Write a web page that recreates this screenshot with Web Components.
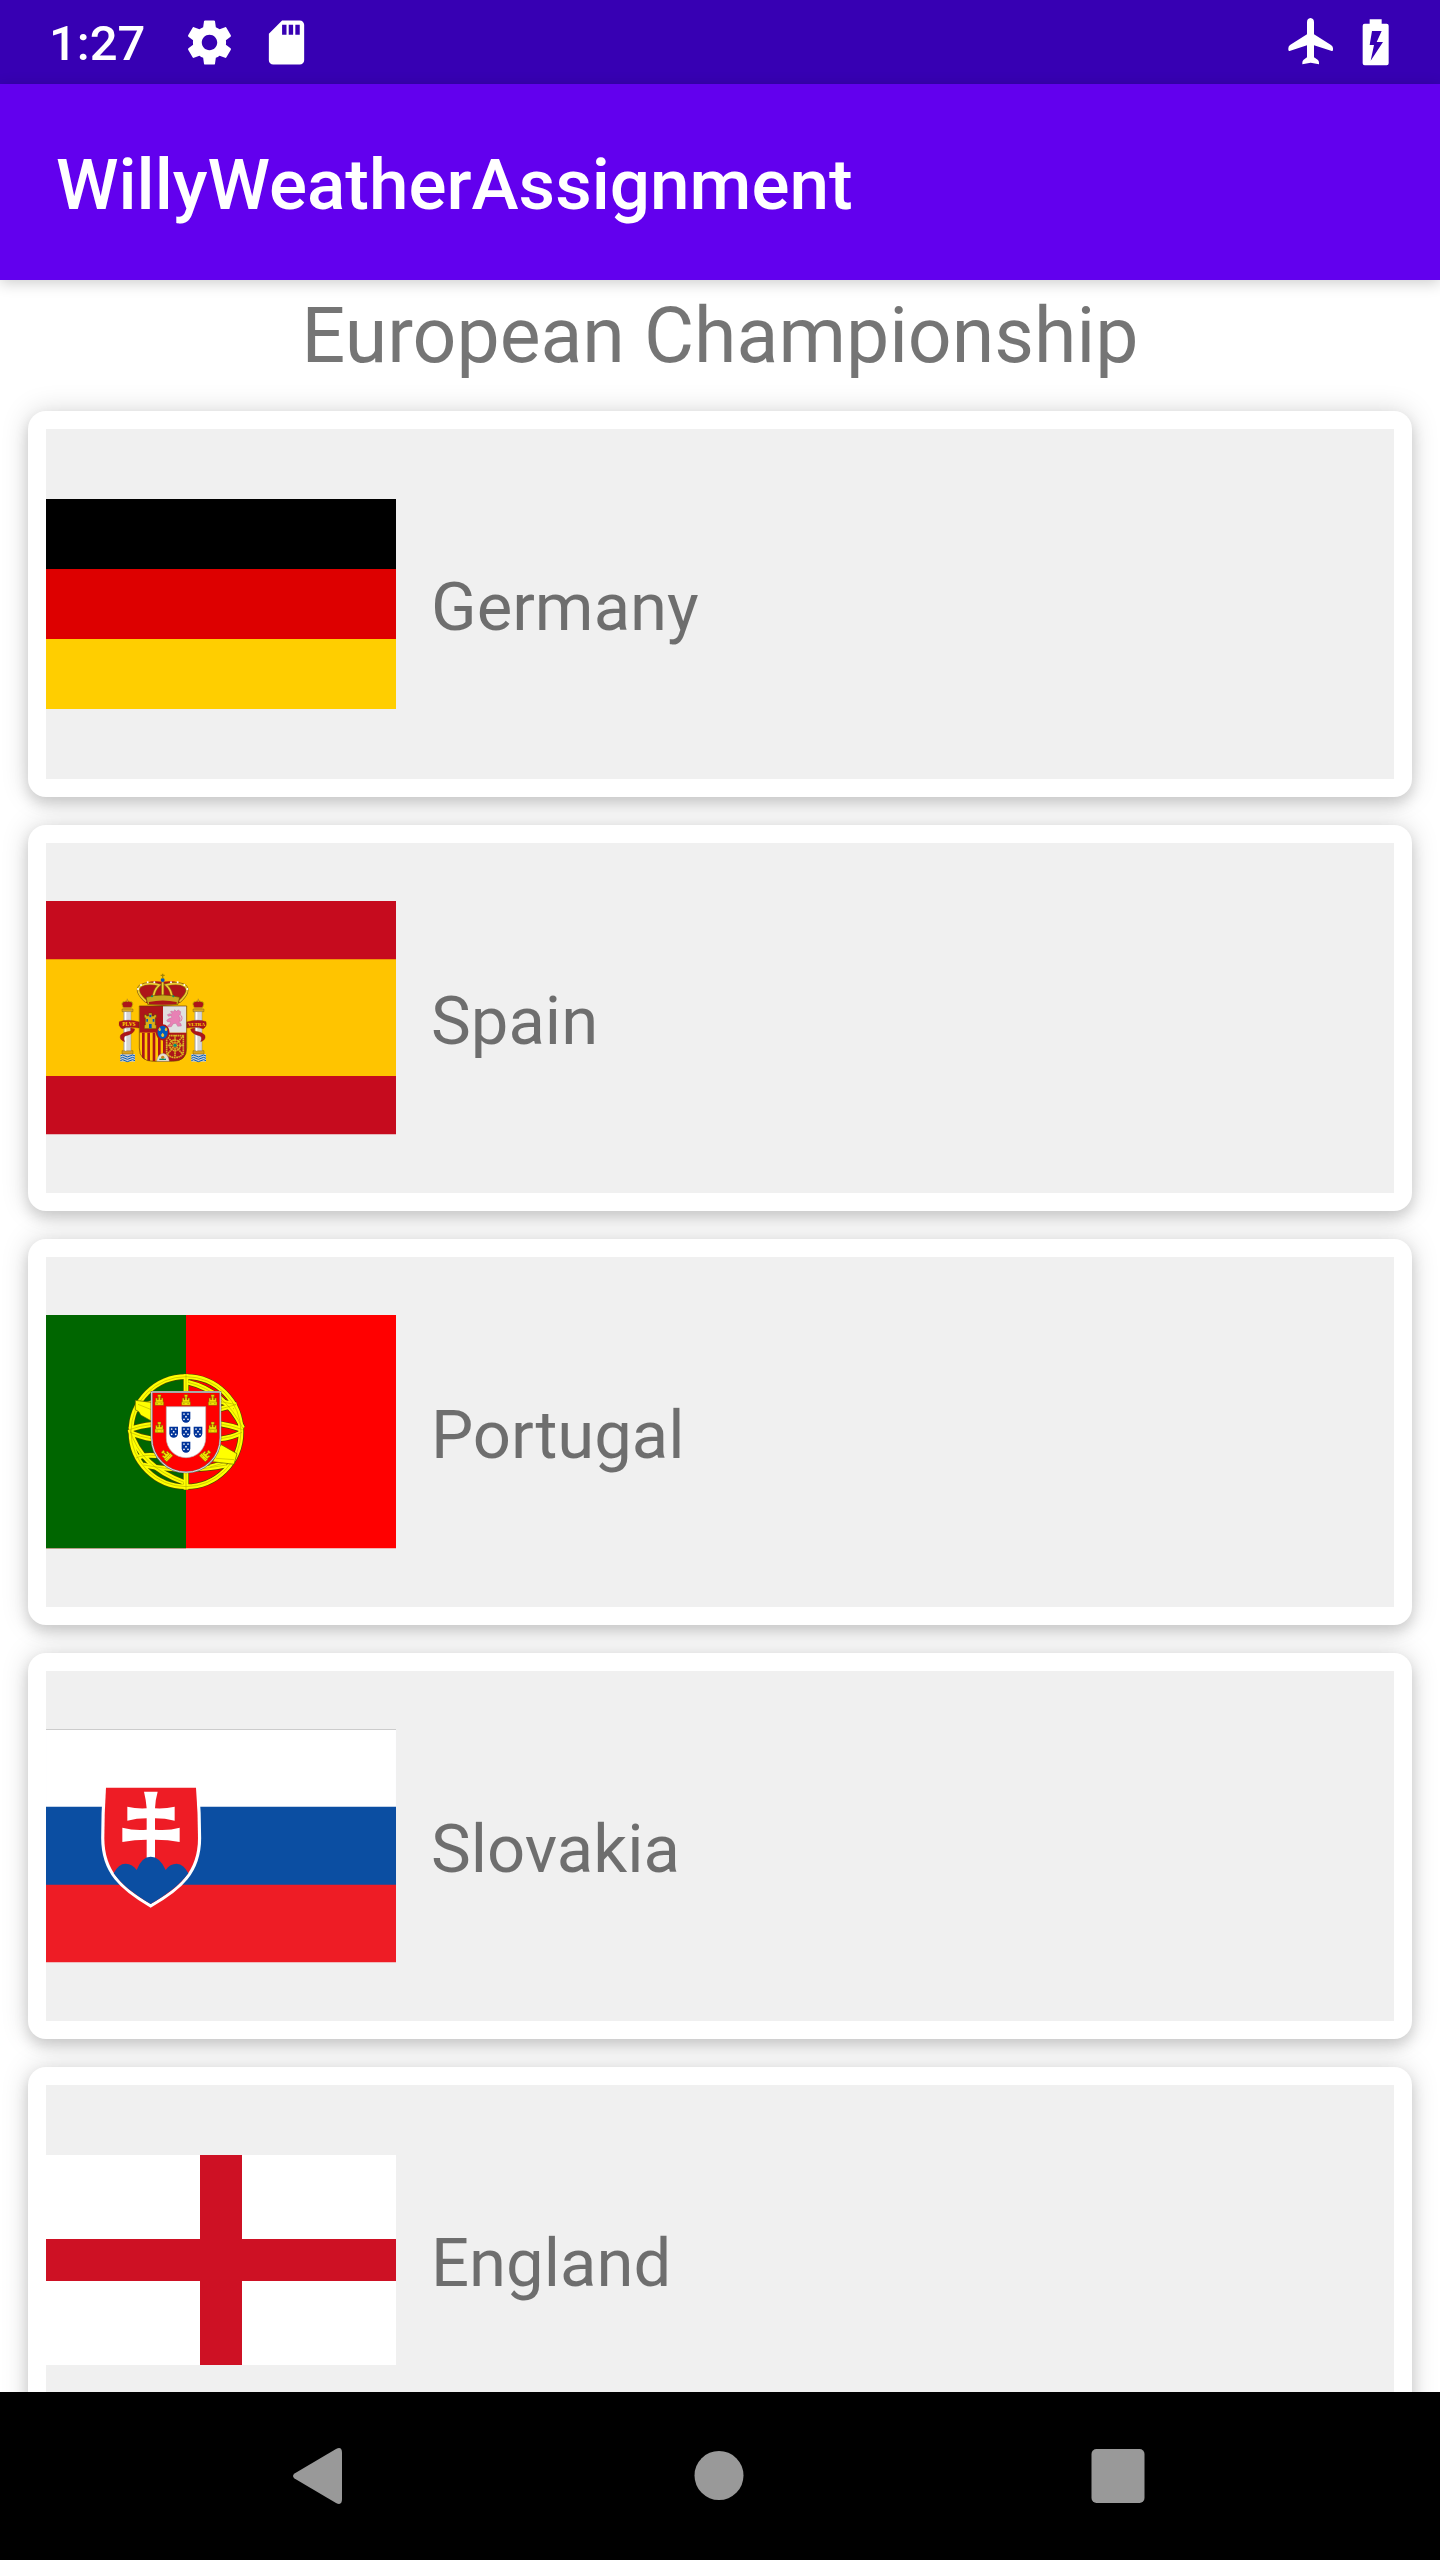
<!DOCTYPE html>
<html lang="en">
<head>
<meta charset="utf-8">
<meta name="viewport" content="width=device-width, initial-scale=1">
<title>WillyWeatherAssignment</title>
<style>
  html, body { margin: 0; height: 100%; }
  body { background: #fff; font-family: Roboto, sans-serif; overflow: hidden; }
</style>
</head>
<body>
<app-screen>
  <status-bar slot="status" time="1:27"></status-bar>
  <app-bar slot="bar">WillyWeatherAssignment</app-bar>
  <team-list heading="European Championship">
    <team-card flag="germany">Germany</team-card>
    <team-card flag="spain">Spain</team-card>
    <team-card flag="portugal">Portugal</team-card>
    <team-card flag="slovakia">Slovakia</team-card>
    <team-card flag="england">England</team-card>
  </team-list>
  <nav-bar slot="nav"></nav-bar>
</app-screen>

<script>
const define = (name, render) => customElements.define(name, class extends HTMLElement {
  constructor() { super(); this.attachShadow({ mode: 'open' }); }
  connectedCallback() { this.shadowRoot.innerHTML = render(this); }
});

/* ---------- Flags (1 unit = a third of a pixel at full size) ---------- */

const castle = (x, y, turn = 0) => `<g transform="translate(${x} ${y}) rotate(${turn})">
  <path d="M-13 16V5h2V-6h5v5h3v-9h-2v-6h10v6h-2v9h3v-5h5V5h2v11z" fill="#f2e400" stroke="#7a6200" stroke-width="1.5"/>
  <path d="M-11 6H11M-9 11h5M4 11h5M-3-9H3" stroke="#8a7400" stroke-width="1.5"/></g>`;

const quina = (x, y) => `<g transform="translate(${x} ${y})">
  <path d="M-13-16h26V4a13 13 0 0 1-26 0z" fill="#039"/>
  <g fill="#fff"><circle cx="-6" cy="-9" r="2.6"/><circle cx="6" cy="-9" r="2.6"/><circle r="2.6" cy="-1"/><circle cx="-6" cy="7" r="2.6"/><circle cx="6" cy="7" r="2.6"/></g></g>`;

const sphere = `
  <circle cx="228" cy="246" r="165"/>
  <path d="M228 74V420"/>
  <path d="M78 180Q150 140 228 142Q310 150 378 165L330 178"/>
  <path d="M58 240Q90 228 128 224M328 222Q366 228 398 240"/>
  <path d="M60 248Q90 262 128 268M328 268Q366 264 396 248"/>
  <path d="M78 325Q100 314 140 318M300 352Q330 345 350 335"/>
  <path d="M100 346Q228 372 350 346"/>
  <path d="M234 98Q345 125 398 235"/>
  <path d="M60 240Q90 350 222 398"/>`;

const pillar = x => `<g transform="translate(${x} 0)">
  <path d="M-15 283h44v23h-44z" fill="#ccc"/>
  <path d="M-15 290q7-6 14 0t15 0 15 0M-15 297q7-6 14 0t15 0 15 0M-15 304q7-6 14 0t15 0 15 0" transform="translate(0 -1)" fill="none" stroke="#005bbf" stroke-width="3"/>
  <path d="M-10 273h33v10h-33zM-10 148h33v8h-33z" fill="#d9a520" stroke="#6b4a00" stroke-width="1"/>
  <path d="M-5 156h22v117h-22z" fill="#d6d6d6" stroke="#777" stroke-width="1"/>
  <path d="M1 157v116" stroke="#fff" stroke-width="4"/>
  <path d="M-5 146q-9-14-3-19q14-8 28 0q6 5-3 19z" fill="#ad1519" stroke="#c8b100" stroke-width="3"/>
  <path d="M6 117v10M-6 145h24" stroke="#c8941e" stroke-width="4"/></g>`;

const FLAGS = {
  germany: ['0 0 5 3', `<path d="M0 0h5v3H0z"/><path fill="#d00" d="M0 1h5v2H0z"/><path fill="#ffce00" d="M0 2h5v1H0z"/>`],
  england: ['0 0 350 210', `<path fill="#fff" d="M0 0h350v210H0z"/><path fill="#ce1124" d="M154 0h42v84h154v42H196v84h-42v-84H0V84h154z"/>`],
  spain: ['0 0 1050 700', `
    <path fill="#c60b1e" d="M0 0h1050v700H0z"/><path fill="#ffc400" d="M0 175h1050v350H0z"/>
    <g transform="translate(162 176)">
      ${pillar(76)}${pillar(289)}
      <g fill="#ad1519" stroke="#7a0c10" stroke-width="1">
        <path d="M58 186Q85 177 118 187V205Q88 200 66 207Q54 199 58 186z"/>
        <path d="M92 205L104 208Q104 222 76 229Q68 233 74 246Q56 240 62 226Q70 217 92 214z"/>
        <path d="M318 186Q292 177 260 187V205Q288 200 310 207Q322 199 318 186z"/>
        <path d="M284 205L272 208Q272 222 300 229Q308 233 302 246Q320 240 314 226Q306 217 284 214z"/>
      </g>
      <g fill="#ffd500" font-family="Liberation Serif, serif" font-weight="700" font-size="16">
        <text x="67" y="200">PLVS</text><text x="264" y="200" font-size="15">VLTRA</text>
      </g>
      <path d="M139 130Q102 96 121 79Q142 60 188 66Q234 60 255 79Q275 96 238 130z" fill="#ad1519"/>
      <g fill="none" stroke="#8c6510" stroke-width="9">
        <path d="M139 126Q103 94 121 79Q142 66 178 76Q160 92 160 118M238 126Q273 94 255 79Q236 66 198 76Q216 92 216 118M188 68V116"/></g>
      <g fill="none" stroke="#f0cc32" stroke-width="5">
        <path d="M139 126Q103 94 121 79Q142 66 178 76Q160 92 160 118M238 126Q273 94 255 79Q236 66 198 76Q216 92 216 118M188 68V116"/></g>
      <path d="M138 113Q188 99 239 113L234 134Q188 141 143 134z" fill="#c8a81c" stroke="#6b4a00" stroke-width="2"/>
      <path d="M147 127Q188 118 230 127V133Q188 138 147 133z" fill="#ad1519"/>
      <g fill="#fff"><circle cx="114" cy="88" r="3"/><circle cx="123" cy="76" r="3"/><circle cx="143" cy="68" r="3"/><circle cx="163" cy="68" r="3"/><circle cx="213" cy="68" r="3"/><circle cx="233" cy="68" r="3"/><circle cx="253" cy="76" r="3"/><circle cx="262" cy="88" r="3"/></g>
      <g fill="#058e6e"><circle cx="156" cy="110" r="3"/><circle cx="220" cy="110" r="3"/></g>
      <circle cx="188" cy="61" r="6" fill="#005bbf"/><path d="M188 42v15M182 47h12" stroke="#a88500" stroke-width="4"/>
      <clipPath id="arms"><path d="M118 139H260V265Q260 305 218 305H160Q118 305 118 265z"/></clipPath>
      <g clip-path="url(#arms)">
        <path fill="#ad1519" d="M118 139h71v80h-71z"/><path fill="#e0e0e0" d="M189 139h71v80h-71z"/>
        <path fill="#ffc400" d="M118 219h71v86h-71z"/><path fill="#ad1519" d="M189 219h71v86h-71z"/>
        <path d="M130 219v86M146 219v86M162 219v86M178 219v86" stroke="#ad1519" stroke-width="8"/>
        <g fill="none" stroke="#d8b422" stroke-width="5" stroke-dasharray="5 1.5">
          <path d="M200 228h50v50q-3 14-25 16q-22-2-25-16zM200 228l50 58M250 228l-50 58M225 226v66M198 257h54"/><circle cx="225" cy="257" r="16"/></g>
        <circle cx="225" cy="257" r="5" fill="#058e6e"/>
      </g>
      <path d="M118 139H260V265Q260 305 218 305H160Q118 305 118 265z" fill="none" stroke="#6b3a0a" stroke-width="2"/>
      <path d="M133 207v-11h3v-22h-3v-9h7v4h6v-9h10v9h6v-4h7v9h-3v22h3v11z" fill="#d8b018" stroke="#5a3a00" stroke-width="1.5"/>
      <path d="M147 206v-13h8v13zM139 178h5v8h-5zM158 178h5v8h-5zM148 165h6v8h-6z" fill="#0058b8"/>
      <path d="M214 154l7 2 3-6 5 5 6-4 7 5-1 9-5 3 5 7-1 8-4 4 7 5 1 7-11 1-5-9-8 1-6 9-10 1-1-5 7-3 1-8-8 1-3-5 8-6 7-2-1-6-9 2-3-5 7-3 6 1 1-4-5-2z" fill="#e881b5" stroke="#b05a84" stroke-width="1"/>
      <path d="M238 185q8 1 8-9t-5-8" fill="none" stroke="#e070a4" stroke-width="3"/>
      <path d="M170 305Q173 283 189 281Q205 283 208 305z" fill="#e8e0d0" stroke="#777" stroke-width="1"/>
      <circle cx="188" cy="293" r="5" fill="#c8831c"/><path d="M178 299h20" stroke="#058e6e" stroke-width="4"/>
      <ellipse cx="188" cy="218" rx="18" ry="22" fill="#005bbf" stroke="#ad1519" stroke-width="5"/>
      <g fill="#e8c33a"><path d="M179 203l4 6-2 5h-4l-2-5zM198 203l4 6-2 5h-4l-2-5zM188 219l5 7-3 6h-4l-3-6z"/></g>
    </g>`],
  portugal: ['0 0 1050 700', `
    <path fill="#f00" d="M0 0h1050v700H0z"/><path fill="#060" d="M0 0h420v700H0z"/>
    <g transform="translate(192 104)">
      <g fill="none" stroke="#4a4a00" stroke-width="18">${sphere}</g>
      <g fill="none" stroke="#ff0" stroke-width="14">${sphere}</g>
      <g fill="none" stroke="#a8a000" stroke-width="1.5">${sphere}</g>
      <path d="M76 152L124 158V214L92 196Q88 184 76 180zM332 284L381 312L372 344L308 336z" fill="#ff0" stroke="#5a5a00" stroke-width="2"/>
      <path d="M124 180L84 164M318 326L372 330" stroke="#a8a000" stroke-width="1.5"/>
      <path d="M125 127H331V265A103 103 0 0 1 125 265z" fill="#f00" stroke="#777" stroke-width="6"/>
      <path d="M125 127H331V265A103 103 0 0 1 125 265z" fill="none" stroke="#ddd" stroke-width="3"/>
      <path d="M169 171H287V265A59 59 0 0 1 169 265z" fill="#fff" stroke="#bbb" stroke-width="2"/>
      ${castle(148, 151)}${castle(228, 151)}${castle(308, 151)}${castle(148, 233)}${castle(308, 233)}${castle(168, 316, -45)}${castle(288, 316, 45)}
      ${quina(228, 202)}${quina(191, 247)}${quina(228, 247)}${quina(264, 247)}${quina(228, 292)}
    </g>`],
  slovakia: ['0 0 1050 700', `
    <path fill="#ee1c25" d="M0 0h1050v700H0z"/><path fill="#0b4ea2" d="M0 0h1050v467H0z"/><path fill="#fff" d="M0 0h1050v233H0z"/>
    <path fill="#ccc" d="M0 0h1050v3H0z"/>
    <g transform="translate(102 92)">
      <path d="M78 84H348Q354 160 354 235C354 335 298 384 212 433C128 384 73 335 73 235Q73 160 78 84z" fill="#ee1c25" stroke="#fff" stroke-width="19" paint-order="stroke"/>
      <path fill="#fff" d="M192 96H233Q226 120 225 146Q255 148 284 141V183Q255 176 225 176V210Q265 214 299 204V247Q265 240 225 240V300H200V240Q165 240 127 247V204Q165 214 200 210V176Q170 176 142 183V141Q170 148 200 146Q198 120 192 96z"/>
      <path fill="#0b4ea2" d="M101 341Q115 312 137 312Q158 313 170 331Q185 291 212 291Q240 291 257 331Q270 312 290 312Q312 314 325 341C297 378 260 405 212 433C165 405 128 378 101 341z"/>
    </g>`]
};

define('country-flag', el => {
  const [box, art] = FLAGS[el.getAttribute('name')];
  return `<style>:host{display:block} svg{display:block;width:100%;height:auto}</style>
    <svg viewBox="${box}" aria-hidden="true">${art}</svg>`;
});

/* ---------- Shell ---------- */

define('app-screen', () => `
  <style>
    :host { display: flex; flex-direction: column; height: 100vh; }
    main { flex: 1; min-height: 0; overflow: hidden; }
  </style>
  <slot name="status"></slot>
  <slot name="bar"></slot>
  <main><slot></slot></main>
  <slot name="nav"></slot>`);

define('status-bar', el => `
  <style>
    :host { display: flex; align-items: center; gap: 24px; flex: none; height: 84px; padding: 0 38px 0 49px;
            box-sizing: border-box; background: #3700b3; color: #fff; }
    time { font-size: 49px; line-height: 56px; font-weight: 500; padding-top: 4px; margin-right: 14px; }
    svg { display: block; width: 53px; height: 53px; fill: currentColor; }
    .end { display: flex; margin-left: auto; gap: 12px; }
  </style>
  <time>${el.getAttribute('time')}</time>
  <svg viewBox="0 0 24 24" role="img" aria-label="Settings"><path d="M19.43 12.98c.04-.32.07-.64.07-.98s-.03-.66-.07-.98l2.11-1.65c.19-.15.24-.42.12-.64l-2-3.46c-.12-.22-.39-.3-.61-.22l-2.49 1c-.52-.4-1.08-.73-1.69-.98l-.38-2.65C14.46 2.18 14.25 2 14 2h-4c-.25 0-.46.18-.49.42l-.38 2.65c-.61.25-1.17.59-1.69.98l-2.49-1c-.23-.09-.49 0-.61.22l-2 3.46c-.13.22-.07.49.12.64l2.11 1.65c-.04.32-.07.65-.07.98s.03.66.07.98l-2.11 1.65c-.19.15-.24.42-.12.64l2 3.46c.12.22.39.3.61.22l2.49-1c.52.4 1.08.73 1.69.98l.38 2.65c.03.24.24.42.49.42h4c.25 0 .46-.18.49-.42l.38-2.65c.61-.25 1.17-.59 1.69-.98l2.49 1c.23.09.49 0 .61-.22l2-3.46c.12-.22.07-.49-.12-.64l-2.11-1.65zM12 15.5c-1.93 0-3.5-1.57-3.5-3.5s1.57-3.5 3.5-3.5 3.5 1.57 3.5 3.5-1.57 3.5-3.5 3.5z"/></svg>
  <svg viewBox="0 0 24 24" role="img" aria-label="SD card"><path d="M18 2h-8L4.02 8 4 20c0 1.1.9 2 2 2h12c1.1 0 2-.9 2-2V4c0-1.1-.9-2-2-2zm-6 6.500h-2V4h2v4.500zm3 0h-2V4h2v4.500zm3 0h-2V4h2v4.500z"/></svg>
  <div class="end">
    <svg viewBox="130 47 159 159" role="img" aria-label="Airplane mode"><path d="M209.500 53Q220 54 220 66V102L271 134Q277 138 277 144V150Q276 153 271 151L220 135V171L231 178Q235 181 235 187V192L210 187L185 192V187Q185 181 189 178L199 171V135L149 151Q144 153 143 149V144Q143 138 148 134L199 102V66Q199 54 209.500 53z"/></svg>
    <svg viewBox="328 47 159 159" role="img" aria-label="Battery charging"><path fill-rule="evenodd" d="M390 57H426V70H441Q447 70 447 76V189Q447 195 441 195H375Q369 195 369 189V76Q369 70 375 70H390zM397 92L390 134H403L393 181L430 125H411L426 92z"/></svg>
  </div>`);

define('app-bar', () => `
  <style>
    :host { display: flex; align-items: center; flex: none; height: 196px; padding: 6px 56px 0; box-sizing: border-box;
            position: relative; background: #6200ee; color: #fff; box-shadow: 0 3px 14px rgba(0,0,0,.2); }
    h1 { margin: 0; font-size: 71px; line-height: 82px; font-weight: 500; }
  </style>
  <h1><slot></slot></h1>`);

define('team-list', el => `
  <style>
    :host { display: block; }
    h2 { margin: 0; padding-top: 10px; font-size: 77px; line-height: 92px; font-weight: 400; text-align: center; color: rgba(0,0,0,.54); }
    .cards { display: flex; flex-direction: column; gap: 28px; padding: 29px 28px; }
  </style>
  <h2>${el.getAttribute('heading')}</h2>
  <div class="cards" role="list"><slot></slot></div>`);

define('team-card', el => `
  <style>
    :host { display: block; padding: 18px; border-radius: 18px; background: #fff;
            box-shadow: 0 7px 14px rgba(0,0,0,.15), 0 0 28px rgba(0,0,0,.15); }
    .row { display: flex; align-items: center; gap: 35px; height: 350px; background: #f0f0f0; color: rgba(0,0,0,.54); }
    country-flag { width: 350px; }
    span { padding-top: 6px; font-size: 67px; line-height: 80px; }
  </style>
  <div class="row" role="listitem"><country-flag name="${el.getAttribute('flag')}"></country-flag><span><slot></slot></span></div>`);

define('nav-bar', () => `
  <style>
    :host { display: flex; flex: none; height: 168px; padding: 0 123px 0 122px; box-sizing: border-box; background: #000; }
    button { flex: 1; display: flex; align-items: center; justify-content: center; padding: 0; border: 0; background: none; color: #999; }
    svg { display: block; width: 56px; height: 56px; fill: currentColor; }
  </style>
  <button aria-label="Back"><svg viewBox="0 0 56 56"><path d="M1.500 25.500L43 1Q49-2 49 5V51Q49 58 43 55L1.500 30.500Q-1.500 28 1.500 25.500z"/></svg></button>
  <button aria-label="Home"><svg viewBox="0 0 56 56"><circle cx="28" cy="27.500" r="24.500"/></svg></button>
  <button aria-label="Overview"><svg viewBox="0 0 56 56"><rect x="1.500" y="1" width="53" height="54" rx="5"/></svg></button>`);
</script>
</body>
</html>
